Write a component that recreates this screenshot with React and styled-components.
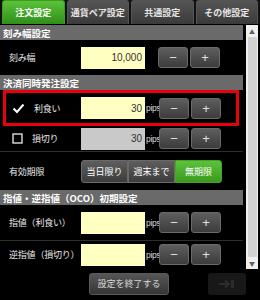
import React from "react";
import styled, { createGlobalStyle } from "styled-components";

const GlobalStyle = createGlobalStyle`
  html, body {
    margin: 0;
    padding: 0;
    background: #000;
  }
  body {
    font-family: "Noto Sans CJK JP", "Noto Sans", sans-serif;
  }
`;

const Frame = styled.div`
  width: 260px;
  height: 300px;
  background: #000;
  display: flex;
  flex-direction: column;
  overflow: hidden;
`;

const TabBar = styled.div`
  display: flex;
  gap: 2px;
  padding: 0 2px;
  height: 24px;
  background: #111;
`;

const Tab = styled.div`
  flex: 1;
  display: flex;
  align-items: center;
  justify-content: center;
  border-radius: 3px 3px 0 0;
  font-size: 9px;
  font-weight: bold;
  white-space: nowrap;
  color: ${(p) => (p.$active ? "#fff" : "#e6e6e6")};
  background: ${(p) =>
    p.$active
      ? "linear-gradient(#5cc23a, #2f8f18)"
      : "linear-gradient(#555, #3a3a3a)"};
  border: 1px solid ${(p) => (p.$active ? "#3d9d20" : "#555")};
  border-bottom: none;
`;

const Body = styled.div`
  display: flex;
  height: 244px;
  margin-top: 1px;
`;

const Content = styled.div`
  flex: 1;
  display: flex;
  flex-direction: column;
`;

const Header = styled.div`
  height: 15px;
  background: #6a6a6a;
  color: #fff;
  font-size: 9.5px;
  font-weight: bold;
  padding-left: 3px;
  display: flex;
  align-items: center;
  white-space: nowrap;
  overflow: hidden;
`;

const Row = styled.div`
  position: relative;
  display: flex;
  align-items: center;
  height: ${(p) => p.$h}px;
  border-bottom: ${(p) => (p.$line ? "1px solid #2e2e2e" : "none")};

  &::after {
    content: "";
    display: ${(p) => (p.$highlight ? "block" : "none")};
    position: absolute;
    top: 0;
    left: 3px;
    right: 4px;
    bottom: 0;
    border: 3px solid #e8000b;
  }
`;

const Label = styled.div`
  width: 81px;
  box-sizing: border-box;
  padding-left: ${(p) => (p.$indent ? 12 : 9)}px;
  display: flex;
  align-items: center;
  gap: 9px;
  color: #e8e8e8;
  font-size: 9px;
  letter-spacing: -0.2px;
  white-space: nowrap;
`;

const Input = styled.div`
  width: 64px;
  height: 22px;
  box-sizing: border-box;
  background: ${(p) => (p.$disabled ? "#c9c9c9" : "#ffffc2")};
  color: #333;
  font-family: "Liberation Sans", Arial, sans-serif;
  font-size: 10px;
  display: flex;
  align-items: center;
  justify-content: flex-end;
  padding-right: 3px;
`;

const Unit = styled.span`
  width: 13px;
  color: #ddd;
  font-family: "Liberation Sans", Arial, sans-serif;
  font-size: 8.5px;
  letter-spacing: -0.3px;
  white-space: nowrap;
  padding-left: 1px;
`;

const StepGroup = styled.div`
  display: flex;
  gap: 2px;
  margin-left: ${(p) => p.$offset}px;
`;

const StepButton = styled.div`
  width: 30px;
  height: 21px;
  box-sizing: border-box;
  border: 1px solid #6a6a6a;
  border-radius: 3px;
  background: linear-gradient(#5e5e5e, #3c3c3c);
  color: #e0e0e0;
  font-family: "Liberation Sans", Arial, sans-serif;
  font-size: 13px;
  display: flex;
  align-items: center;
  justify-content: center;
`;

const Segments = styled.div`
  display: flex;
  height: 23px;
`;

const Segment = styled.div`
  width: 47px;
  box-sizing: border-box;
  display: flex;
  align-items: center;
  justify-content: center;
  font-size: 9px;
  white-space: nowrap;
  color: #fff;
  border: 1px solid ${(p) => (p.$active ? "#45a625" : "#6a6a6a")};
  background: ${(p) =>
    p.$active
      ? "linear-gradient(#5cc23a, #3a9a1e)"
      : "linear-gradient(#5e5e5e, #3c3c3c)"};
  border-radius: ${(p) =>
    p.$first ? "3px 0 0 3px" : p.$last ? "0 3px 3px 0" : "0"};
`;

const ScrollTrack = styled.div`
  width: 12px;
  margin-right: 2px;
  margin-left: 3px;
  background: #f0f0f0;
  display: flex;
  flex-direction: column;
  align-items: center;
  height: 244px;
`;

const Arrow = styled.div`
  height: 12px;
  font-size: 6px;
  color: #606060;
  display: flex;
  align-items: center;
  justify-content: center;
`;

const Thumb = styled.div`
  flex: 1;
  width: 9px;
  background: #d2d2d2;
  border-radius: 1px;
`;

const Footer = styled.div`
  flex: 1;
  display: flex;
  align-items: center;
  padding-bottom: 2px;
`;

const EndButton = styled.div`
  margin-left: 89px;
  width: 80px;
  height: 22px;
  box-sizing: border-box;
  border: 1px solid #5a5a5a;
  border-radius: 3px;
  background: linear-gradient(#565656, #363636);
  color: #d8d8d8;
  font-size: 9px;
  display: flex;
  align-items: center;
  justify-content: center;
`;

const NextButton = styled.div`
  margin-left: 39px;
  width: 38px;
  height: 22px;
  border-radius: 3px;
  background: #181818;
  display: flex;
  align-items: center;
  justify-content: center;
`;

const Check = () => (
  <svg width="13" height="11" viewBox="0 0 13 11">
    <polyline
      points="1.5,5.5 5,9 11.5,1.5"
      fill="none"
      stroke="#fff"
      strokeWidth="2"
    />
  </svg>
);

const Box = () => (
  <svg width="11" height="11" viewBox="0 0 11 11">
    <rect x="1" y="1" width="9" height="9" fill="none" stroke="#eee" strokeWidth="1.3" />
  </svg>
);

const Steps = ({ offset = 0 }) => (
  <StepGroup $offset={offset}>
    <StepButton>−</StepButton>
    <StepButton>+</StepButton>
  </StepGroup>
);

export default function App() {
  return (
    <>
      <GlobalStyle />
      <Frame>
        <TabBar>
          <Tab $active>注文設定</Tab>
          <Tab>通貨ペア設定</Tab>
          <Tab>共通設定</Tab>
          <Tab>その他設定</Tab>
        </TabBar>
        <Body>
          <Content>
            <Header>刻み幅設定</Header>
            <Row $h={35}>
              <Label>刻み幅</Label>
              <Input>10,000</Input>
              <Steps offset={13} />
            </Row>
            <Header>決済同時発注設定</Header>
            <Row $h={36} $highlight>
              <Label $indent>
                <Check />
                利食い
              </Label>
              <Input>30</Input>
              <Unit>pips</Unit>
              <Steps />
            </Row>
            <Row $h={25} $line>
              <Label $indent>
                <Box />
                損切り
              </Label>
              <Input $disabled>30</Input>
              <Unit>pips</Unit>
              <Steps />
            </Row>
            <Row $h={38}>
              <Label>有効期限</Label>
              <Segments>
                <Segment $first>当日限り</Segment>
                <Segment>週末まで</Segment>
                <Segment $active $last>無期限</Segment>
              </Segments>
            </Row>
            <Header>指値・逆指値（OCO）初期設定</Header>
            <Row $h={35} $line>
              <Label>指値（利食い）</Label>
              <Input />
              <Unit>pips</Unit>
              <Steps />
            </Row>
            <Row $h={27}>
              <Label>逆指値（損切り）</Label>
              <Input />
              <Unit>pips</Unit>
              <Steps />
            </Row>
          </Content>
          <ScrollTrack>
            <Arrow>▲</Arrow>
            <Thumb />
            <Arrow>▼</Arrow>
          </ScrollTrack>
        </Body>
        <Footer>
          <EndButton>設定を終了する</EndButton>
          <NextButton>
            <svg width="18" height="10" viewBox="0 0 18 10">
              <path d="M1 5h9M7 1.5l4 3.5-4 3.5" stroke="#2c2c2c" strokeWidth="2" fill="none" />
              <rect x="13" y="1" width="3" height="8" fill="#2c2c2c" />
            </svg>
          </NextButton>
        </Footer>
      </Frame>
    </>
  );
}
